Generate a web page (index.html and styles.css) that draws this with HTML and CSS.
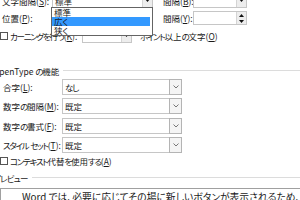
FILE: index.html
```html
<!DOCTYPE html>
<html lang="ja">
<head>
<meta charset="utf-8">
<title>フォント詳細設定</title>
<link rel="stylesheet" href="styles.css">
</head>
<body>
<div class="page">
  <div class="top">
    <div class="row">
      <span class="lbl lbl-a">文字間隔(<u>S</u>):</span>
      <div class="combo combo-a"><span class="val">標準</span><span class="btn-dark"><svg width="5" height="3" viewBox="0 0 5 3"><polygon points="0,0 5,0 2.5,3" fill="#111"/></svg></span></div>
      <span class="lbl lbl-r">間隔(<u>B</u>):</span>
      <div class="spin"><span class="spin-btn"><span class="sb"><svg width="5" height="3" viewBox="0 0 5 3"><polygon points="0,0 5,0 2.5,3" fill="#111"/></svg></span></span></div>
    </div>
    <div class="row">
      <span class="lbl lbl-a">位置(<u>P</u>):</span>
      <div class="combo combo-a"></div>
      <span class="lbl lbl-r">間隔(<u>Y</u>):</span>
      <div class="spin"><span class="spin-btn"><span class="sb"><svg width="5" height="3" viewBox="0 0 5 3"><polygon points="0,3 5,3 2.5,0" fill="#111"/></svg></span><span class="sb"><svg width="5" height="3" viewBox="0 0 5 3"><polygon points="0,0 5,0 2.5,3" fill="#111"/></svg></span></span></div>
    </div>
    <div class="row">
      <span class="check"></span>
      <span class="lbl lbl-k"><span class="k">カーニングを</span>行<span class="k">う</span>(<u>K</u>):</span>
      <div class="combo combo-k"><span class="val"></span><span class="btn-dark"><svg width="5" height="3" viewBox="0 0 5 3"><polygon points="0,0 5,0 2.5,3" fill="#111"/></svg></span></div>
      <span class="lbl lbl-pt"><span class="k">ポイント</span>以上<span class="k">の</span>文字(<u>O</u>)</span>
    </div>
    <ul class="droplist">
      <li>標準</li>
      <li class="sel">広<span class="k">く</span></li>
      <li>狭<span class="k">く</span></li>
    </ul>
  </div>

  <div class="group-head"><span>OpenType <span class="k">の</span>機能</span><i class="rule"></i></div>
  <div class="ot">
    <div class="ot-row"><span class="ot-lbl">合字(<u>L</u>):</span><div class="combo combo-ot"><span class="val"><span class="k">なし</span></span><span class="btn-lite"><svg width="6" height="4" viewBox="0 0 6 4"><polyline points="0.5,0.5 3,3 5.5,0.5" fill="none" stroke="#777" stroke-width="1"/></svg></span></div></div>
    <div class="ot-row"><span class="ot-lbl">数字<span class="k">の</span>間隔(<u>M</u>):</span><div class="combo combo-ot"><span class="val">既定</span><span class="btn-lite"><svg width="6" height="4" viewBox="0 0 6 4"><polyline points="0.5,0.5 3,3 5.5,0.5" fill="none" stroke="#777" stroke-width="1"/></svg></span></div></div>
    <div class="ot-row"><span class="ot-lbl">数字<span class="k">の</span>書式(<u>F</u>):</span><div class="combo combo-ot"><span class="val">既定</span><span class="btn-lite"><svg width="6" height="4" viewBox="0 0 6 4"><polyline points="0.5,0.5 3,3 5.5,0.5" fill="none" stroke="#777" stroke-width="1"/></svg></span></div></div>
    <div class="ot-row"><span class="ot-lbl"><span class="k">スタイル</span> <span class="k">セット</span>(<u>T</u>):</span><div class="combo combo-ot"><span class="val">既定</span><span class="btn-lite"><svg width="6" height="4" viewBox="0 0 6 4"><polyline points="0.5,0.5 3,3 5.5,0.5" fill="none" stroke="#777" stroke-width="1"/></svg></span></div></div>
  </div>
  <div class="row-check"><span class="check"></span><span><span class="k">コンテキスト</span>代替<span class="k">を</span>使用<span class="k">する</span>(<u>A</u>)</span></div>

  <div class="group-head head-preview"><span><span class="k">プレビュー</span></span><i class="rule"></i></div>
  <div class="preview"><p>Word では、必要に応じてその場に新しいボタンが表示されるため、</p></div>
</div>
</body>
</html>
```

FILE: styles.css
```css
html, body {
  margin: 0;
  padding: 0;
  background: #fff;
}
body {
  width: 300px;
  height: 200px;
  overflow: hidden;
  font-family: "Noto Sans CJK JP", "Noto Sans", sans-serif;
  font-size: 8.5px;
  line-height: 12px;
  color: #1a1a1a;
  font-feature-settings: "palt";
}
u {
  text-decoration: underline;
  text-underline-offset: 1px;
}
.k {
  letter-spacing: -1.3px;
}
.top {
  position: relative;
  margin-top: -8px;
}
.row {
  display: flex;
  align-items: center;
  height: 17.5px;
}
.lbl {
  white-space: nowrap;
}
.lbl-a {
  box-sizing: border-box;
  width: 52px;
  padding-left: 2px;
}
.combo {
  box-sizing: border-box;
  height: 14px;
  border: 1px solid #c6c6c6;
  background: #fff;
  display: flex;
  align-items: stretch;
}
.combo-a {
  width: 101px;
}
.val {
  flex: 1;
  padding-left: 2px;
  line-height: 12px;
  white-space: nowrap;
}
.btn-dark {
  width: 9px;
  background: #ededed;
  border-left: 1px solid #d4d4d4;
  display: flex;
  align-items: center;
  justify-content: center;
}
.lbl-r {
  box-sizing: border-box;
  margin-left: 10px;
  width: 30px;
}
.spin {
  box-sizing: border-box;
  width: 54px;
  height: 14px;
  border: 1px solid #c6c6c6;
  display: flex;
  justify-content: flex-end;
}
.spin-btn {
  width: 9px;
  display: flex;
  flex-direction: column;
  background: #ededed;
  border-left: 1px solid #d4d4d4;
}
.sb {
  flex: 1;
  display: flex;
  align-items: center;
  justify-content: center;
}
.check {
  box-sizing: border-box;
  width: 8px;
  height: 8px;
  border: 1px solid #555;
  background: #fff;
  margin-right: 2px;
  flex: none;
}
.lbl-k {
  width: 72px;
}
.combo-k {
  width: 50px;
}
.lbl-pt {
  margin-left: 8px;
}
.droplist {
  position: absolute;
  left: 51px;
  top: 15px;
  width: 102px;
  height: 29px;
  box-sizing: border-box;
  margin: 0;
  padding: 0;
  list-style: none;
  border: 1px solid #646464;
  background: #fff;
}
.droplist li {
  height: 9px;
  line-height: 9px;
  padding-left: 2px;
  margin-right: 2px;
}
.droplist li.sel {
  background: #3399ff;
}
.group-head {
  display: flex;
  align-items: center;
  height: 12px;
  margin-left: -7px;
  margin-top: 20px;
}
.group-head span {
  white-space: nowrap;
}
.rule {
  flex: 1;
  height: 0;
  border-top: 1px solid #dcdcdc;
  margin-left: 4px;
}
.ot {
  padding-top: 1px;
}
.ot-row {
  display: flex;
  align-items: center;
  height: 19.33px;
}
.ot-lbl {
  box-sizing: border-box;
  width: 62px;
  padding-left: 3px;
  white-space: nowrap;
}
.combo-ot {
  width: 120px;
  height: 16px;
}
.combo-ot .val {
  padding-top: 1px;
}
.btn-lite {
  width: 11px;
  background: #f4f4f4;
  border: 1px solid #b4b4b4;
  margin: -1px -1px -1px 0;
  display: flex;
  align-items: center;
  justify-content: center;
}
.row-check {
  display: flex;
  align-items: center;
  height: 12px;
}
.head-preview {
  margin-top: 5px;
}
.head-preview .k {
  letter-spacing: -0.8px;
}
.preview {
  margin-top: 4px;
  width: 330px;
  height: 30px;
  border: 1px solid #a0a0a0;
  padding: 2px 0 0 21px;
  font-size: 9.8px;
}
.preview p {
  margin: 0;
  white-space: nowrap;
}
```
